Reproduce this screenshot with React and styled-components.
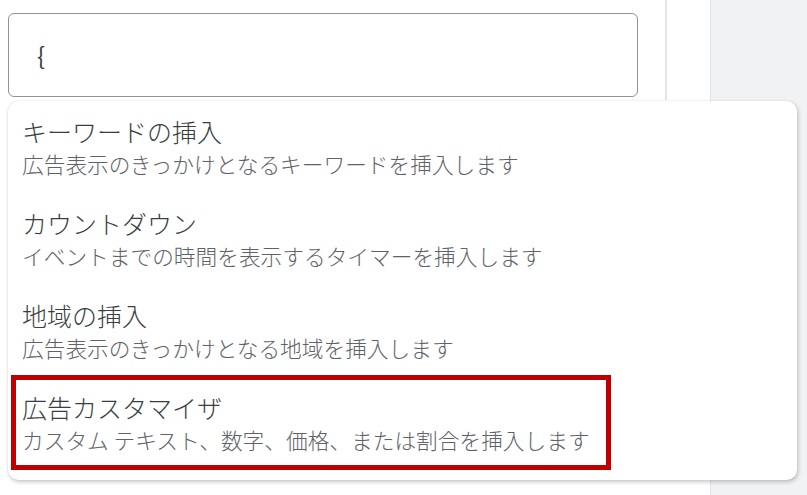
import React from "react";
import styled, { createGlobalStyle } from "styled-components";

const GlobalStyle = createGlobalStyle`
  html, body { margin: 0; padding: 0; background: #ffffff; }
  body {
    font-family: "Noto Sans CJK JP", "Noto Sans", sans-serif;
    width: 807px;
    height: 495px;
    overflow: hidden;
  }
`;

const Page = styled.div`
  display: flex;
  width: 807px;
  height: 495px;
`;

const Main = styled.div`
  position: relative;
  width: 710px;
  height: 100%;
  background: #ffffff;
`;

const EditorColumn = styled.div`
  width: 667px;
  height: 100px;
  box-sizing: border-box;
  padding: 13px 0 0 8px;
  border-right: 2px solid #e4e4e6;
`;

const Sidebar = styled.div`
  flex: 1;
  height: 100%;
  background: #f1f2f4;
  border-left: 1px solid #e3e4e6;
`;

const Field = styled.div`
  box-sizing: border-box;
  width: 630px;
  height: 84px;
  border: 1.5px solid #8f9499;
  border-radius: 6px;
  padding: 24px 28px 0;
  font-family: "Noto Sans CJK JP", sans-serif;
  font-size: 24px;
  line-height: 34px;
  color: #3c4043;
`;

const Menu = styled.ul`
  position: absolute;
  top: 101px;
  left: 8px;
  width: 789px;
  height: 379px;
  box-sizing: border-box;
  margin: 0;
  padding: 0 0 11px;
  list-style: none;
  background: #ffffff;
  border-radius: 10px;
  box-shadow: 1px 2px 4px rgba(0, 0, 0, 0.22), 0 0 1px rgba(0, 0, 0, 0.18);
`;

const Item = styled.li`
  position: relative;
  height: 92px;
  box-sizing: border-box;
  padding: 13px 14px 13px;

  ${(p) =>
    p.$highlighted &&
    `
    &::after {
      content: "";
      position: absolute;
      left: 3px;
      top: -2px;
      width: 600px;
      bottom: -1px;
      box-sizing: border-box;
      border: 5px solid #c00000;
      pointer-events: none;
    }
  `}
`;

const Title = styled.div`
  font-size: 25px;
  font-weight: 300;
  line-height: 34px;
  color: #3a3d41;
  white-space: nowrap;
`;

const Subtitle = styled.div`
  font-size: 21.7px;
  font-weight: 300;
  line-height: 32px;
  color: #5f6368;
  white-space: nowrap;
`;

const items = [
  {
    title: "キーワードの挿入",
    desc: "広告表示のきっかけとなるキーワードを挿入します",
  },
  {
    title: "カウントダウン",
    desc: "イベントまでの時間を表示するタイマーを挿入します",
  },
  {
    title: "地域の挿入",
    desc: "広告表示のきっかけとなる地域を挿入します",
  },
  {
    title: "広告カスタマイザ",
    desc: "カスタム テキスト、数字、価格、または割合を挿入します",
    highlighted: true,
  },
];

export default function App() {
  return (
    <>
      <GlobalStyle />
      <Page>
        <Main>
          <EditorColumn>
            <Field>{"{"}</Field>
          </EditorColumn>
          <Menu>
            {items.map((it) => (
              <Item key={it.title} $highlighted={it.highlighted}>
                <Title>{it.title}</Title>
                <Subtitle>{it.desc}</Subtitle>
              </Item>
            ))}
          </Menu>
        </Main>
        <Sidebar />
      </Page>
    </>
  );
}
